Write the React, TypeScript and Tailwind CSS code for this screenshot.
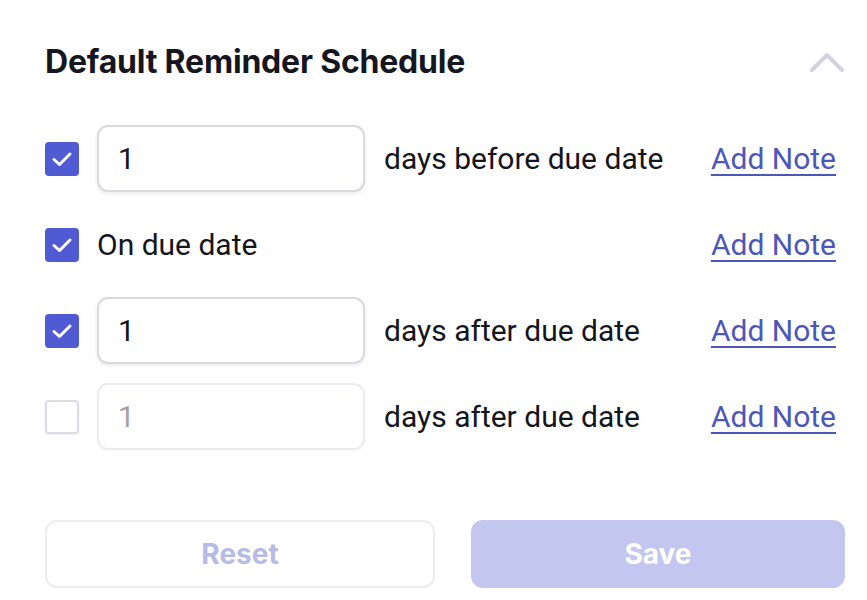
import React from "react";

function Check({ checked }: { checked: boolean }) {
  if (checked) {
    return (
      <div className="w-[34px] h-[34px] shrink-0 rounded-[4px] bg-[#4f5ad3] flex items-center justify-center">
        <svg width="22" height="18" viewBox="0 0 22 18" fill="none">
          <path d="M3 9.5 L8.5 14.5 L19 4" stroke="white" strokeWidth="3" strokeLinecap="round" strokeLinejoin="round" />
        </svg>
      </div>
    );
  }
  return (
    <div className="w-[34px] h-[34px] shrink-0 rounded-[4px] bg-white border-2 border-[#dcdce2] shadow-[0_1px_2px_rgba(0,0,0,0.08)]" />
  );
}

function NumInput({ disabled }: { disabled?: boolean }) {
  return (
    <div
      className={
        "w-[268px] h-[67px] shrink-0 rounded-[11px] bg-white flex items-center pl-[19px] text-[30px] " +
        (disabled
          ? "border-2 border-[#ececf0] text-[#a3a3a3] shadow-[0_1px_3px_rgba(0,0,0,0.04)]"
          : "border-2 border-[#d9d9de] text-[#15151c] shadow-[0_2px_4px_rgba(0,0,0,0.08)]")
      }
    >
      1
    </div>
  );
}

function AddNote() {
  return (
    <span className="text-[30px] text-[#4c57b9] underline underline-offset-[5px] decoration-2 mr-[9px]">
      Add Note
    </span>
  );
}

export default function App() {
  return (
    <div
      className="w-[867px] h-[600px] bg-white overflow-hidden pl-[45px] pr-[22px]"
      style={{ fontFamily: "Roboto, 'Liberation Sans', sans-serif" }}
    >
      <div className="flex items-center justify-between h-[62px] mt-[31px]">
        <h1
          className="text-[32px] font-bold text-[#16161f] tracking-[-0.2px]"
          style={{ fontFamily: "Inter, 'Liberation Sans', sans-serif" }}
        >
          Default Reminder Schedule
        </h1>
        <svg width="36" height="22" viewBox="0 0 36 22" fill="none">
          <path d="M3 19 L18 4 L33 19" stroke="#d3d3e0" strokeWidth="4" strokeLinecap="round" strokeLinejoin="round" />
        </svg>
      </div>

      <div className="mt-[32px] flex flex-col gap-[19px]">
        <div className="flex items-center justify-between h-[67px]">
          <div className="flex items-center">
            <Check checked />
            <div className="ml-[18px]"><NumInput /></div>
            <span className="ml-[19px] text-[30px] text-[#15151c]">days before due date</span>
          </div>
          <AddNote />
        </div>
        <div className="flex items-center justify-between h-[67px]">
          <div className="flex items-center">
            <Check checked />
            <span className="ml-[18px] text-[30px] text-[#15151c]">On due date</span>
          </div>
          <AddNote />
        </div>
        <div className="flex items-center justify-between h-[67px]">
          <div className="flex items-center">
            <Check checked />
            <div className="ml-[18px]"><NumInput /></div>
            <span className="ml-[19px] text-[30px] text-[#15151c]">days after due date</span>
          </div>
          <AddNote />
        </div>
        <div className="flex items-center justify-between h-[67px]">
          <div className="flex items-center">
            <Check checked={false} />
            <div className="ml-[18px]"><NumInput disabled /></div>
            <span className="ml-[19px] text-[30px] text-[#15151c]">days after due date</span>
          </div>
          <AddNote />
        </div>
      </div>

      <div
        className="mt-[70px] flex gap-[36px]"
        style={{ fontFamily: "Inter, 'Liberation Sans', sans-serif" }}
      >
        <button className="w-[390px] h-[68px] rounded-[12px] border-2 border-[#ededf0] bg-white text-[28px] font-bold text-[#b7bbe6]">
          Reset
        </button>
        <button className="w-[374px] h-[68px] rounded-[12px] bg-[#c3c6ee] text-[28px] font-bold text-white">
          Save
        </button>
      </div>
    </div>
  );
}
